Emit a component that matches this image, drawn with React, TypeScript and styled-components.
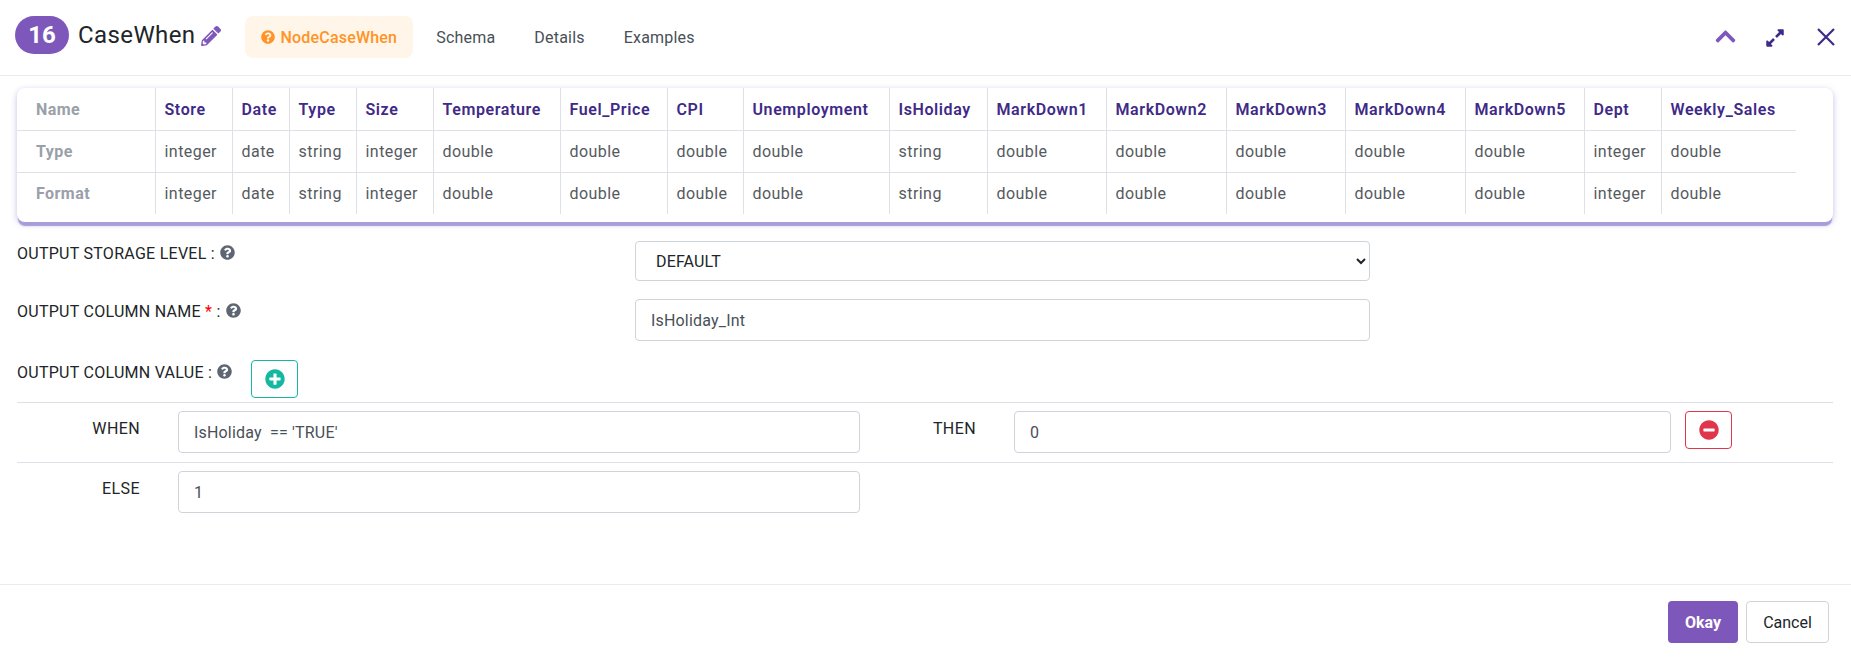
import styled, { createGlobalStyle } from "styled-components";
import {
  FaChevronUp,
  FaExpandAlt,
  FaMinusCircle,
  FaPencilAlt,
  FaPlusCircle,
  FaQuestionCircle,
} from "react-icons/fa";

const columns = [
  { name: "Store", type: "integer", width: 77 },
  { name: "Date", type: "date", width: 57 },
  { name: "Type", type: "string", width: 67 },
  { name: "Size", type: "integer", width: 77 },
  { name: "Temperature", type: "double", width: 127 },
  { name: "Fuel_Price", type: "double", width: 107 },
  { name: "CPI", type: "double", width: 76 },
  { name: "Unemployment", type: "double", width: 146 },
  { name: "IsHoliday", type: "string", width: 98 },
  { name: "MarkDown1", type: "double", width: 119 },
  { name: "MarkDown2", type: "double", width: 120 },
  { name: "MarkDown3", type: "double", width: 119 },
  { name: "MarkDown4", type: "double", width: 120 },
  { name: "MarkDown5", type: "double", width: 119 },
  { name: "Dept", type: "integer", width: 77 },
  { name: "Weekly_Sales", type: "double", width: 135 },
];

export default function App() {
  return (
    <Page>
      <GlobalStyle />
      <Header>
        <Badge>16</Badge>
        <Title>CaseWhen</Title>
        <EditIcon />
        <Tabs>
          <Tab $active>
            <FaQuestionCircle size={14} />
            NodeCaseWhen
          </Tab>
          <Tab>Schema</Tab>
          <Tab>Details</Tab>
          <Tab>Examples</Tab>
        </Tabs>
        <HeaderActions>
          <CollapseIcon />
          <ExpandIcon />
          <svg width="20" height="20" viewBox="0 0 20 20" fill="none" stroke="#3f2a87" strokeWidth="2.2">
            <path d="M2 2 18 18M18 2 2 18" />
          </svg>
        </HeaderActions>
      </Header>

      <Body>
        <SchemaCard>
          <SchemaTable>
            <colgroup>
              <Col $width={138} />
              {columns.map((c) => (
                <Col key={c.name} $width={c.width} />
              ))}
            </colgroup>
            <tbody>
              <tr>
                <RowHead>Name</RowHead>
                {columns.map((c) => (
                  <ColumnName key={c.name}>{c.name}</ColumnName>
                ))}
              </tr>
              <tr>
                <RowHead>Type</RowHead>
                {columns.map((c) => (
                  <Cell key={c.name}>{c.type}</Cell>
                ))}
              </tr>
              <tr>
                <RowHead>Format</RowHead>
                {columns.map((c) => (
                  <Cell key={c.name}>{c.type}</Cell>
                ))}
              </tr>
            </tbody>
          </SchemaTable>
        </SchemaCard>

        <FormRow $top={19}>
          <Label>
            OUTPUT STORAGE LEVEL : <HelpIcon />
          </Label>
          <Select defaultValue="DEFAULT">
            <option>DEFAULT</option>
          </Select>
        </FormRow>

        <FormRow $top={18}>
          <Label>
            OUTPUT COLUMN NAME <Required>*</Required> : <HelpIcon />
          </Label>
          <Input readOnly defaultValue="IsHoliday_Int" />
        </FormRow>

        <ValueRow>
          <Label>
            OUTPUT COLUMN VALUE : <HelpIcon />
          </Label>
          <IconButton $color="#14b8a0">
            <FaPlusCircle size={20} />
          </IconButton>
        </ValueRow>

        <ConditionRow>
          <ConditionLabel $width={123}>WHEN</ConditionLabel>
          <ConditionInput $width={682} readOnly defaultValue="IsHoliday  == 'TRUE'" />
          <ConditionLabel $width={116}>THEN</ConditionLabel>
          <ConditionInput $width={657} readOnly defaultValue="0" />
          <RemoveSlot>
            <IconButton $color="#e0354b">
              <FaMinusCircle size={20} />
            </IconButton>
          </RemoveSlot>
        </ConditionRow>

        <ConditionRow>
          <ConditionLabel $width={123}>ELSE</ConditionLabel>
          <ConditionInput $width={682} readOnly defaultValue="1" />
        </ConditionRow>
      </Body>

      <Footer>
        <OkayButton>Okay</OkayButton>
        <CancelButton>Cancel</CancelButton>
      </Footer>
    </Page>
  );
}

const GlobalStyle = createGlobalStyle`
  html, body {
    margin: 0;
    padding: 0;
    background: #fff;
    overflow: hidden;
  }
  * {
    box-sizing: border-box;
  }
  body, input, select, button {
    font-family: Roboto, "Liberation Sans", sans-serif;
  }
`;

const Page = styled.div`
  height: 657px;
  display: flex;
  flex-direction: column;
  color: #212529;
`;

const Header = styled.header`
  height: 76px;
  flex: none;
  display: flex;
  align-items: flex-start;
  padding: 16px 15px 0 15px;
  border-bottom: 1px solid #e9e9ef;
`;

const Badge = styled.span`
  width: 54px;
  height: 38px;
  border-radius: 19px;
  background: #7e57bb;
  color: #fff;
  font-size: 24px;
  font-weight: 700;
  line-height: 38px;
  text-align: center;
`;

const Title = styled.h4`
  margin: 1px 0 0 9px;
  font-size: 24px;
  font-weight: 400;
  line-height: 36px;
  letter-spacing: 0.4px;
  color: #212529;
`;

const EditIcon = styled(FaPencilAlt)`
  width: 20px;
  height: 20px;
  margin: 10px 0 0 6px;
  color: #7e57bb;
`;

const Tabs = styled.nav`
  display: flex;
  gap: 7px;
  margin-left: 24px;
`;

const Tab = styled.a<{ $active?: boolean }>`
  display: flex;
  align-items: center;
  gap: 5px;
  height: 42px;
  padding: 0 16px;
  border-radius: 8px;
  font-size: 16px;
  letter-spacing: 0.2px;
  font-weight: ${(p) => (p.$active ? 500 : 400)};
  color: ${(p) => (p.$active ? "#ff9326" : "#495057")};
  background: ${(p) => (p.$active ? "#fff5e9" : "transparent")};
`;

const HeaderActions = styled.div`
  margin-left: auto;
  display: flex;
  align-items: center;
  gap: 31px;
  height: 42px;
`;

const CollapseIcon = styled(FaChevronUp)`
  width: 23px;
  height: 23px;
  margin: -1px -3px 0 0;
  color: #7e57bb;
`;

const ExpandIcon = styled(FaExpandAlt)`
  width: 20px;
  height: 20px;
  margin-top: 1px;
  color: #3f2a87;
`;

const Body = styled.main`
  flex: 1;
  padding: 12px 18px 0 17px;
`;

const SchemaCard = styled.section`
  height: 134px;
  border-radius: 8px;
  background: #fff;
  box-shadow: 0 5px 1px -1px #a69dd9, 0 2px 6px rgba(90, 70, 190, 0.35);
`;

const SchemaTable = styled.table`
  table-layout: fixed;
  width: 1779px;
  border-collapse: collapse;
  font-size: 16px;
  letter-spacing: 0.45px;
  tr + tr td,
  tr + tr th {
    border-top: 1px solid #dfdfe8;
  }
  tr:first-child th {
    padding-top: 2px;
  }
`;

const Col = styled.col<{ $width: number }>`
  width: ${(p) => p.$width}px;
`;

const RowHead = styled.th`
  height: 42px;
  padding: 0 0 0 19px;
  text-align: left;
  font-weight: 700;
  color: #9aa0a8;
`;

const Cell = styled.td`
  height: 42px;
  padding: 0 0 0 9px;
  border-left: 1px solid #dfdfe8;
  color: #555a60;
`;

const ColumnName = styled(Cell)`
  padding-top: 2px;
  font-weight: 600;
  letter-spacing: 0.6px;
  color: #3f2a87;
`;

const FormRow = styled.div<{ $top: number }>`
  display: grid;
  grid-template-columns: 618px 735px;
  align-items: start;
  margin-top: ${(p) => p.$top}px;
`;

const ValueRow = styled.div`
  display: flex;
  align-items: flex-start;
  gap: 19px;
  margin-top: 19px;
  height: 42px;
`;

const Label = styled.label`
  display: block;
  padding-top: 2px;
  font-size: 16px;
  letter-spacing: 0.27px;
  line-height: 22px;
  color: #212529;
`;

const Required = styled.span`
  color: #f00;
`;

const HelpIcon = styled(FaQuestionCircle)`
  width: 15px;
  height: 15px;
  margin-left: 1px;
  vertical-align: -1px;
  color: #5e6673;
`;

const Select = styled.select`
  width: 100%;
  height: 40px;
  padding: 0 16px;
  border: 1px solid #ced4da;
  border-radius: 4px;
  background: #fff;
  font-size: 16px;
  letter-spacing: 0.15px;
  color: #212529;
`;

const Input = styled.input`
  width: 100%;
  height: 42px;
  padding: 0 15px;
  border: 1px solid #ced4da;
  border-radius: 4px;
  font-size: 16px;
  letter-spacing: 0.18px;
  color: #495057;
  outline: none;
`;

const IconButton = styled.button<{ $color: string }>`
  width: 47px;
  height: 38px;
  flex: none;
  display: flex;
  align-items: center;
  justify-content: center;
  padding: 0;
  border: 1px solid ${(p) => p.$color};
  border-radius: 4px;
  background: #fff;
  color: ${(p) => p.$color};
`;

const ConditionRow = styled.div`
  display: flex;
  align-items: flex-start;
  height: 60px;
  padding-top: 8px;
  border-top: 1px solid #dfdfe8;
`;

const ConditionLabel = styled.span<{ $width: number }>`
  width: ${(p) => p.$width}px;
  flex: none;
  margin-right: 38px;
  padding-top: 7px;
  font-size: 16px;
  letter-spacing: 0.4px;
  line-height: 22px;
  text-align: right;
`;

const ConditionInput = styled(Input)<{ $width: number }>`
  width: ${(p) => p.$width}px;
  flex: none;
`;

const RemoveSlot = styled.div`
  margin-left: 14px;
`;

const Footer = styled.footer`
  flex: none;
  height: 73px;
  display: flex;
  justify-content: flex-end;
  gap: 8px;
  padding: 16px 22px 0 0;
  border-top: 1px solid #e9e9ef;
`;

const OkayButton = styled.button`
  width: 70px;
  height: 42px;
  border: none;
  border-radius: 4px;
  background: #7e57bb;
  color: #fff;
  font-size: 16px;
  font-weight: 700;
`;

const CancelButton = styled.button`
  width: 83px;
  height: 42px;
  border: 1px solid #ced4da;
  border-radius: 4px;
  background: #fff;
  color: #212529;
  font-size: 16px;
`;
